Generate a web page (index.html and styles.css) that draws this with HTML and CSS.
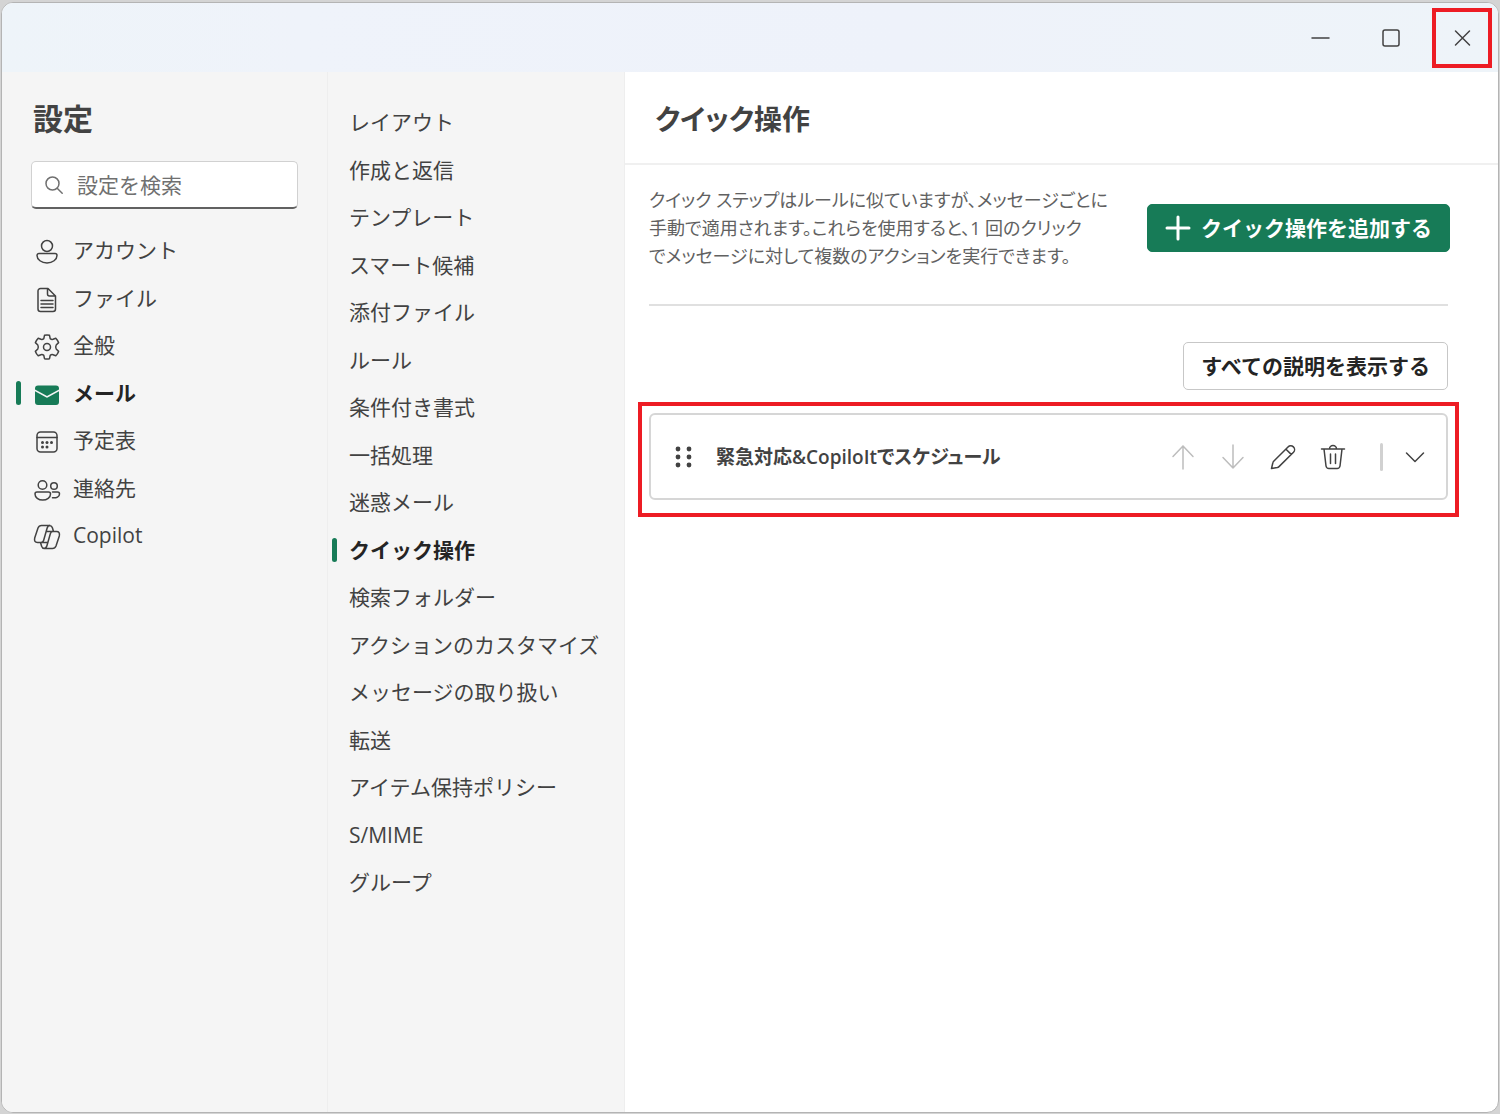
FILE: index.html
```html
<!DOCTYPE html>
<html lang="ja">
<head>
<meta charset="utf-8">
<meta name="viewport" content="width=device-width, initial-scale=1">
<title>設定 - クイック操作</title>
<link rel="stylesheet" href="styles.css">
</head>
<body>
<div class="window">
  <header class="titlebar">
    <button class="caption" type="button" aria-label="最小化"><svg width="20" height="20" viewBox="0 0 20 20"><path d="M2 10h17"/></svg></button>
    <button class="caption" type="button" aria-label="最大化"><svg width="20" height="20" viewBox="0 0 20 20"><rect x="2" y="2" width="16" height="16" rx="2"/></svg></button>
    <button class="caption caption-marked" type="button" aria-label="閉じる"><svg width="20" height="20" viewBox="0 0 20 20"><path d="M3.500 3l14 14M17.500 3l-14 14"/></svg></button>
  </header>
  <div class="columns">
    <aside class="sidebar">
      <h2 class="heading">設定</h2>
      <label class="search">
        <svg width="20" height="20" viewBox="0 0 20 20"><circle cx="8.500" cy="8.500" r="6.500"/><path d="M13.200 13.200l5 5"/></svg>
        <input type="search" placeholder="設定を検索" aria-label="設定を検索">
      </label>
      <nav aria-label="設定">
        <ul class="list">
          <li><a class="link" href="#account"><svg width="28" height="28" viewBox="0 0 28 28"><circle cx="14" cy="8" r="5.500"/><path d="M6 15.500h16a2 2 0 0 1 2 2c0 4-4.500 7.500-10 7.500s-10-3.500-10-7.500a2 2 0 0 1 2-2z"/></svg><span>アカウント</span></a></li>
          <li><a class="link" href="#files"><svg width="28" height="28" viewBox="0 0 28 28"><path d="M7.500 2.500H15l7.500 7.500v13a2.500 2.500 0 0 1-2.500 2.500H7.500A2.500 2.500 0 0 1 5 23V5a2.500 2.500 0 0 1 2.500-2.500zM14.500 2.500V8a2 2 0 0 0 2 2h6M8 14.500h12M8 18h12M8 21.500h12"/></svg><span>ファイル</span></a></li>
          <li><a class="link" href="#general"><svg width="28" height="28" viewBox="0 0 28 28"><circle cx="14" cy="14" r="3.500"/><path d="M11.500 2.300Q14 1.700 16.500 2.300L17.200 5.600Q18.400 6.700 20 6.300L22.800 5.200Q24.600 7 25.600 9.600L23.200 12Q22.200 14 23.200 16L25.600 18.400Q24.600 21 22.800 22.800L20 21.700Q18.400 21.300 17.200 22.400L16.500 25.700Q14 26.300 11.500 25.700L10.800 22.400Q9.600 21.300 8 21.700L5.200 22.800Q3.400 21 2.400 18.400L4.800 16Q5.800 14 4.800 12L2.400 9.600Q3.400 7 5.200 5.200L8 6.300Q9.600 6.700 10.800 5.600z"/></svg><span>全般</span></a></li>
          <li><a class="link current" href="#mail" aria-current="page"><svg class="mail" width="28" height="28" viewBox="0 0 28 28"><path d="M2 8.500V7.500a3 3 0 0 1 3-3h18a3 3 0 0 1 3 3v1L14 15z"/><path d="M2 10.300L13.400 16.500q.6.300 1.200 0L26 10.300V21a3 3 0 0 1-3 3H5a3 3 0 0 1-3-3z"/></svg><span>メール</span></a></li>
          <li><a class="link" href="#calendar"><svg width="28" height="28" viewBox="0 0 28 28"><rect x="4" y="4" width="20" height="20" rx="3.500"/><path d="M4 9.500h20"/><g class="solid"><circle cx="9.500" cy="14.500" r="1.500"/><circle cx="14" cy="14.500" r="1.500"/><circle cx="18.500" cy="14.500" r="1.500"/><circle cx="9.500" cy="19" r="1.500"/><circle cx="14" cy="19" r="1.500"/></g></svg><span>予定表</span></a></li>
          <li><a class="link" href="#contacts"><svg width="28" height="28" viewBox="0 0 28 28"><circle cx="9.500" cy="9" r="4.300"/><circle cx="21" cy="10" r="3.300"/><path d="M4 16h11.500a2 2 0 0 1 2 2c0 3.500-3.500 6-7.800 6S2 21.500 2 18a2 2 0 0 1 2-2zM19.500 16H24.500a2 2 0 0 1 2 2c0 2.800-3 4.200-7 3.800"/></svg><span>連絡先</span></a></li>
          <li><a class="link" href="#copilot"><svg width="28" height="28" viewBox="0 0 28 28"><path d="M20.500 8.500L19.400 4.700Q18.700 2.500 16.500 2.500H8.500Q6 2.500 5 5L1.700 15Q.8 19.500 4.500 19.500H8Q10 19.500 10.600 17.500L14 5.500Q14.800 2.500 17 2.500M7.500 19.500L8.600 23.300Q9.300 25.500 11.500 25.500H19.500Q22 25.500 23 23L26.300 13Q27.200 8.500 23.500 8.500H20Q18 8.500 17.400 10.500L14 22.500Q13.200 25.500 11 25.500M13.200 8.500H20M8 19.500H14.800"/></svg><span>Copilot</span></a></li>
        </ul>
      </nav>
    </aside>
    <nav class="subnav" aria-label="メール">
      <ul class="list">
        <li><a class="link" href="#layout">レイアウト</a></li>
        <li><a class="link" href="#compose">作成と返信</a></li>
        <li><a class="link" href="#templates">テンプレート</a></li>
        <li><a class="link" href="#suggestions">スマート候補</a></li>
        <li><a class="link" href="#attachments">添付ファイル</a></li>
        <li><a class="link" href="#rules">ルール</a></li>
        <li><a class="link" href="#formatting">条件付き書式</a></li>
        <li><a class="link" href="#sweep">一括処理</a></li>
        <li><a class="link" href="#junk">迷惑メール</a></li>
        <li><a class="link current" href="#quick" aria-current="page">クイック操作</a></li>
        <li><a class="link" href="#folders">検索フォルダー</a></li>
        <li><a class="link" href="#actions">アクションのカスタマイズ</a></li>
        <li><a class="link" href="#handling">メッセージの取り扱い</a></li>
        <li><a class="link" href="#forwarding">転送</a></li>
        <li><a class="link" href="#retention">アイテム保持ポリシー</a></li>
        <li><a class="link" href="#smime">S/MIME</a></li>
        <li><a class="link" href="#groups">グループ</a></li>
      </ul>
    </nav>
    <main class="main">
      <div class="main-head"><h1 class="heading proportional">クイック操作</h1></div>
      <div class="content">
        <section class="intro">
          <p class="description proportional">クイック ステップはルールに似ていますが、メッセージごとに<br>手動で適用されます。これらを使用すると、1 回のクリック<br>でメッセージに対して複数のアクションを実行できます。</p>
          <button class="button primary" type="button"><svg width="26" height="26" viewBox="0 0 26 26"><path d="M13 2v22M2 13h22"/></svg>クイック操作を追加する</button>
        </section>
        <div class="toolbar"><button class="button" type="button">すべての説明を表示する</button></div>
        <div class="marked">
          <article class="card">
            <svg class="grip" width="20" height="24" viewBox="0 0 20 24"><circle cx="4" cy="4" r="2.400"/><circle cx="15" cy="4" r="2.400"/><circle cx="4" cy="12" r="2.400"/><circle cx="15" cy="12" r="2.400"/><circle cx="4" cy="20" r="2.400"/><circle cx="15" cy="20" r="2.400"/></svg>
            <h3 class="card-title proportional">緊急対応&amp;CopiloItでスケジュール</h3>
            <button class="tool" type="button" disabled aria-label="上へ移動"><svg width="28" height="28" viewBox="0 0 28 28"><path d="M14 26V3M4 13.500L14 3l10 10.500"/></svg></button>
            <button class="tool" type="button" disabled aria-label="下へ移動"><svg width="28" height="28" viewBox="0 0 28 28"><path d="M14 2v23M4 14.500L14 25l10-10.500"/></svg></button>
            <button class="tool" type="button" aria-label="編集"><svg width="28" height="28" viewBox="0 0 28 28"><path d="M19 4a3.700 3.700 0 0 1 5.500 5.300L10 23.600Q9.300 24.300 8.300 24.500L2.500 25.500L3.800 20Q4 19 4.700 18.300zM17 6.200l5.200 5.200"/></svg></button>
            <button class="tool" type="button" aria-label="削除"><svg width="28" height="28" viewBox="0 0 28 28"><path d="M2.500 6h23M10.500 6a3.500 3.500 0 0 1 7 0M5 6l2 17a3 3 0 0 0 3 2.500h8a3 3 0 0 0 3-2.500L23 6M11.500 11v9.500M16.500 11v9.500"/></svg></button>
            <span class="separator"></span>
            <button class="tool" type="button" aria-label="展開"><svg width="28" height="28" viewBox="0 0 28 28"><path d="M5.500 10l8.500 8.500L22.500 10"/></svg></button>
          </article>
        </div>
      </div>
    </main>
  </div>
</div>
</body>
</html>
```
FILE: styles.css
```css
* { box-sizing: border-box; }

body {
  margin: 0;
  padding: 2px 1px 1px 1px;
  min-height: 100vh;
  display: flex;
  background: #d4d4d4;
  color: #424242;
  font: 21px/28px "Open Sans", "Noto Sans CJK JP", sans-serif;
}

h1, h2, h3, p, ul { margin: 0; padding: 0; }

button, input { font: inherit; color: inherit; }

svg {
  flex: none;
  fill: none;
  stroke: currentColor;
  stroke-width: 1.5;
  stroke-linecap: round;
  stroke-linejoin: round;
}

.proportional { font-feature-settings: "palt"; }

.window {
  flex: 1;
  display: flex;
  flex-direction: column;
  border: 1px solid #b4b4b4;
  border-radius: 12px;
  overflow: hidden;
  background: #fff;
}

.titlebar {
  display: flex;
  justify-content: flex-end;
  gap: 11px;
  height: 69px;
  padding: 5px 6px 0 0;
  background: linear-gradient(90deg, #eef4f9, #eff3fa 20%, #eef2fa 60%, #eef4f9);
}

.caption {
  display: grid;
  place-items: center;
  width: 60px;
  height: 60px;
  padding: 0;
  border: 0;
  background: none;
}

.caption-marked { border: 4px solid #ed1c24; }

.columns { flex: 1; display: flex; }

.sidebar, .subnav {
  flex: none;
  border-right: 1px solid #eeeeee;
  background: #f5f5f5;
}

.sidebar { width: 326px; padding: 27px 29px 0 29px; }
.subnav { width: 297px; padding-top: 26px; }

.heading { font-size: 30px; line-height: 40px; font-weight: 700; }

.sidebar .heading { padding-left: 2px; }
.main .heading { font-size: 28px; }

.search {
  display: flex;
  align-items: center;
  gap: 13px;
  height: 48px;
  margin: 22px 0 17px;
  padding: 0 12px;
  border: 1px solid #d1d1d1;
  border-bottom: 2px solid #616161;
  border-radius: 5px;
  background: #fff;
  color: #707070;
}

.search input {
  flex: 1;
  min-width: 0;
  padding: 0;
  border: 0;
  outline: 0;
  background: none;
}

.search input::placeholder { color: #707070; opacity: 1; }

.list { list-style: none; }
.list li { height: 48px; }
.list li:nth-child(even) { height: 47px; }

.link {
  display: flex;
  align-items: center;
  gap: 12px;
  height: 100%;
  color: inherit;
  text-decoration: none;
}

.subnav .link { padding-left: 4px; }

.link::before {
  content: "";
  flex: none;
  width: 5px;
  height: 24px;
  border-radius: 3px;
}

.sidebar .link { margin-left: -15px; }
.sidebar .link svg { position: relative; top: 2px; }
.current { color: #242424; font-weight: 700; }
.current::before { background: #177b57; }
.link .mail { fill: #177b57; stroke: none; }
.solid { fill: currentColor; stroke: none; }

.main { flex: 1; min-width: 0; }
.main-head { padding: 27px 30px 24px; border-bottom: 2px solid #f0f0f0; }
.content { padding: 21px 50px 40px 24px; }

.intro {
  display: flex;
  justify-content: space-between;
  align-items: center;
  padding-bottom: 34px;
  border-bottom: 2px solid #e0e0e0;
}

.description { font-size: 18px; color: #616161; }

.button {
  display: flex;
  align-items: center;
  justify-content: center;
  gap: 10px;
  height: 48px;
  padding: 0 17px;
  border: 1px solid #c7c7c7;
  border-radius: 5px;
  background: #fff;
  color: #242424;
  font-weight: 700;
  white-space: nowrap;
}

.primary { margin-right: -2px; border-color: #177b57; background: #177b57; color: #fff; }
.primary svg { stroke-width: 3; }

.toolbar { display: flex; justify-content: flex-end; padding: 36px 0 12px; }

.marked {
  margin: 0 -11px;
  padding: 7px 7px 13px;
  border: 4px solid #ed1c24;
}

.card {
  display: flex;
  align-items: center;
  height: 87px;
  padding: 0 6px 0 23px;
  border: 2px solid #d6d6d6;
  border-radius: 6px;
}

.grip { fill: currentColor; stroke: none; }

.card-title { flex: 1; margin-left: 22px; font-size: 19px; font-weight: 600; }

.tool {
  display: grid;
  place-items: center;
  width: 50px;
  height: 50px;
  padding: 0;
  border: 0;
  background: none;
}

.tool:disabled { color: #bdbdbd; }

.separator { width: 3px; height: 28px; margin: 0 7px 0 22px; border-radius: 2px; background: #d1d1d1; }
```
